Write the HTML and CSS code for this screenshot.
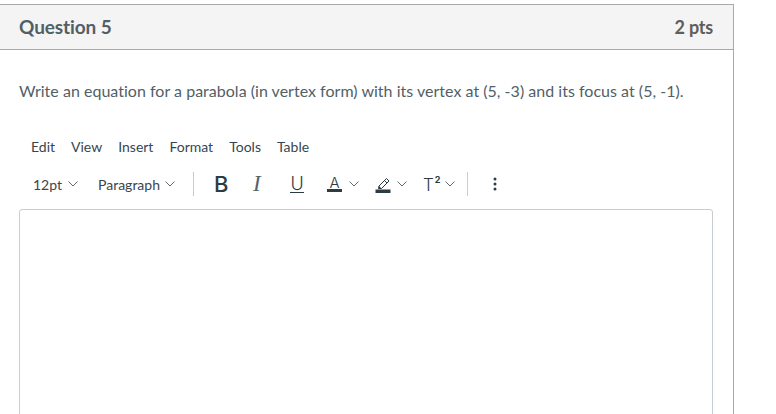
FILE: index.html
```html
<!DOCTYPE html>
<html lang="en">
<head>
<meta charset="utf-8">
<title>Question 5</title>
<link rel="stylesheet" href="styles.css">
</head>
<body>
<section class="card">
  <header class="card-head">
    <h2 class="title">Question 5</h2>
    <div class="points">2 pts</div>
  </header>
  <div class="card-body">
    <p class="prompt">Write an equation for a parabola (in vertex form) with its vertex at (5, -3) and its focus at (5, -1).</p>
    <nav class="menubar">
      <span>Edit</span><span>View</span><span>Insert</span><span>Format</span><span>Tools</span><span>Table</span>
    </nav>
    <div class="toolbar">
      <div class="group group-selects">
        <span class="select size">12pt<svg class="chev" viewBox="0 0 10 6"><path d="M.5.5 5 5 9.500.5"/></svg></span>
        <span class="select para">Paragraph<svg class="chev" viewBox="0 0 10 6"><path d="M.5.5 5 5 9.500.5"/></svg></span>
      </div>
      <div class="group group-format">
        <span class="tool bold">B</span>
        <span class="tool italic">I</span>
        <span class="tool under"><span class="letter">U</span></span>
        <span class="tool color"><span class="letter">A</span><svg class="chev" viewBox="0 0 10 6"><path d="M.5.5 5 5 9.500.5"/></svg></span>
        <span class="tool marker">
          <svg class="pen" viewBox="0 0 16 18"><path class="pen-line" d="M4 11 11.500 3.500l2.500 2.500-7.500 7.500H3.500zM9.500 5.500 12 8"/><path d="M4 11l2.500 2.500H3.500z"/><rect x="0.500" y="14.500" width="15" height="3.500"/></svg>
          <svg class="chev" viewBox="0 0 10 6"><path d="M.5.5 5 5 9.500.5"/></svg>
        </span>
        <span class="tool sup"><span class="tee">T</span><span class="two">2</span><svg class="chev" viewBox="0 0 10 6"><path d="M.5.5 5 5 9.500.5"/></svg></span>
      </div>
      <div class="group group-more">
        <svg class="dots" viewBox="0 0 4 14"><circle cx="2" cy="2" r="1.500"/><circle cx="2" cy="7" r="1.500"/><circle cx="2" cy="12" r="1.500"/></svg>
      </div>
    </div>
    <div class="editor"></div>
  </div>
</section>
</body>
</html>
```

FILE: styles.css
```css
html, body {
  margin: 0;
  height: 414px;
  overflow: hidden;
  background: #fff;
}
body {
  font-family: Lato, "Open Sans", sans-serif;
  color: #2d3b45;
}
.card {
  width: 734px;
  height: 500px;
  margin: 4px 0 0 0;
  box-sizing: border-box;
  border-top: 1px solid #a9a9a9;
  border-right: 1px solid #a9a9a9;
}
.card-head {
  display: flex;
  justify-content: space-between;
  align-items: center;
  height: 44px;
  padding: 0 20px 0 19px;
  background: #f4f4f4;
  border-bottom: 1px solid #a9a9a9;
}
.title {
  margin: 0 0 1px;
  font-size: 19px;
  font-weight: 700;
  letter-spacing: -0.1px;
  color: #525f67;
}
.points {
  font-size: 18px;
  font-weight: 700;
  color: #5e5e5e;
  letter-spacing: -0.2px;
}
.card-body {
  padding: 0 20px 0 19px;
}
.prompt {
  margin: 0;
  padding-top: 30px;
  font-size: 16px;
  line-height: 22px;
  letter-spacing: 0.02px;
  color: #525f67;
}
.menubar {
  display: flex;
  gap: 16px;
  margin: 36px 0 0 12px;
  font-size: 14px;
  line-height: 18px;
  color: #38464f;
}
.toolbar {
  display: flex;
  align-items: center;
  height: 26px;
  margin-top: 15px;
}
.group {
  display: flex;
  align-items: center;
  height: 24px;
}
.group-selects {
  gap: 20px;
  width: 175px;
  box-sizing: border-box;
  padding-left: 14px;
  border-right: 1px solid #c7cdd1;
  font-size: 14px;
  color: #38464f;
}
.select {
  display: flex;
  align-items: center;
  gap: 6px;
}
.para {
  gap: 5px;
}
.chev {
  width: 10px;
  height: 6px;
  flex: none;
  fill: none;
  stroke: #5d6a72;
  stroke-width: 1;
}
.group-format {
  width: 274px;
  box-sizing: border-box;
  padding-left: 20px;
  border-right: 1px solid #c7cdd1;
  color: #2d3b45;
}
.tool {
  display: flex;
  align-items: center;
  flex: none;
}
.bold {
  width: 39px;
  font-family: Inter, sans-serif;
  font-size: 22px;
  font-weight: 500;
}
.italic {
  width: 37px;
  font-family: "Liberation Serif", serif;
  font-style: italic;
  font-size: 23px;
  font-weight: 400;
  color: #56636b;
}
.under {
  width: 37px;
}
.under .letter {
  width: 14px;
  height: 17px;
  box-sizing: border-box;
  border-bottom: 1px solid #2d3b45;
  font-family: Inter, sans-serif;
  font-size: 18px;
  font-weight: 300;
  line-height: 15px;
  text-align: center;
}
.color {
  width: 48px;
  gap: 7px;
}
.color .letter {
  width: 15px;
  height: 16px;
  box-sizing: border-box;
  border-bottom: 3px solid #2d3b45;
  font-family: Inter, sans-serif;
  font-size: 15px;
  font-weight: 300;
  line-height: 13px;
  text-align: center;
}
.marker {
  width: 48px;
  gap: 6px;
}
.pen {
  width: 16px;
  height: 18px;
  fill: #2d3b45;
}
.pen .pen-line {
  fill: none;
  stroke: #2d3b45;
  stroke-width: 1;
}
.sup {
  font-family: Inter, sans-serif;
}
.tee {
  font-size: 17px;
  font-weight: 300;
  position: relative;
  top: 1px;
}
.two {
  font-size: 9px;
  font-weight: 700;
  margin: 0 5px 0 1px;
  position: relative;
  top: -5px;
}
.group-more {
  padding-left: 25px;
}
.dots {
  width: 4px;
  height: 14px;
  fill: #2d3b45;
}
.editor {
  height: 300px;
  margin-top: 12px;
  border: 1px solid #c7cdd1;
  border-radius: 3px;
  box-sizing: border-box;
}
```
